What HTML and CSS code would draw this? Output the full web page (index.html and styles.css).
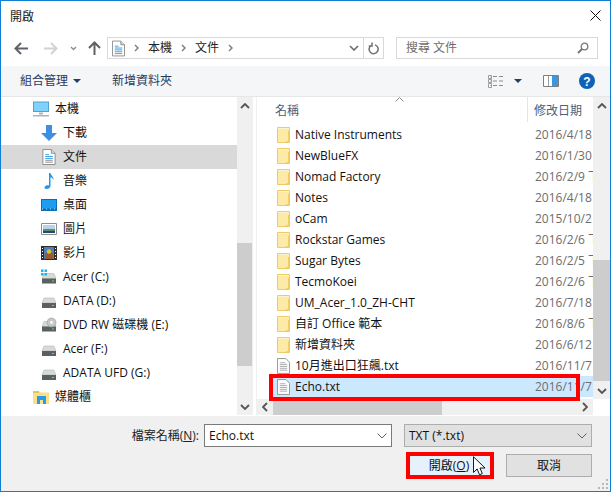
FILE: index.html
```html
<!DOCTYPE html>
<html lang="zh-Hant">
<head>
<meta charset="utf-8">
<title>開啟</title>
<link rel="stylesheet" href="styles.css">
</head>
<body>
<svg class="defs" aria-hidden="true">
  <symbol id="folder" viewBox="0 0 13 16"><path d="M.5.5h12v15H.5z" fill="#fdeaa6" stroke="#eccb6a"/><path d="M1 1h11v1H1z" fill="#fef4cc"/><path d="M11 4h1v11h-1zM9 14h2v1H9z" fill="#f2cf66"/></symbol>
  <symbol id="doc" viewBox="0 0 14 17"><path d="M.5.5h9l4 4v12H.5z" fill="#fff" stroke="#8f8f8f"/><path d="M3 5h6M3 7h8M3 9h8M3 11h8M3 13h8" stroke="#a8a8a8"/></symbol>
  <symbol id="docs" viewBox="0 0 14 17"><path d="M.5.5h9l4 4v12H.5z" fill="#fff" stroke="#8a8a8a"/><path d="M9.500.5v4h4" fill="#ddd" stroke="#8a8a8a"/><path d="M3 6h4M3 8h8M3 10h8" stroke="#2f9be8"/><path d="M3 12h8M3 14h8" stroke="#8a8a8a"/></symbol>
  <symbol id="drive" viewBox="0 0 16 12"><path d="M3 1h10l2 5H1z" fill="#d6dad8" stroke="#b5b8b6" stroke-width=".6"/><path d="M1 6h14v5H1z" fill="#5a5f5f"/><path d="M11 8h2v1h-2z" fill="#5ee06a"/></symbol>
  <symbol id="up-chev" viewBox="0 0 10 6"><path d="M1 5l4-4 4 4" fill="none" stroke="#555" stroke-width="1.800"/></symbol>
  <symbol id="down-chev" viewBox="0 0 10 6"><path d="M1 1l4 4 4-4" fill="none" stroke="#555" stroke-width="1.800"/></symbol>
  <symbol id="thin-chev" viewBox="0 0 10 6"><path d="M.5.5l4.500 4.500 4.500-4.500" fill="none" stroke="#606060"/></symbol>
  <symbol id="crumb" viewBox="0 0 5 8"><path d="M1 1l3 3-3 3" fill="none" stroke="#7a7a7a" stroke-width="1.400"/></symbol>
</svg>

<main class="window">
  <header class="titlebar">
    <span class="title">開啟</span>
    <svg class="close" viewBox="0 0 11 11"><path d="M.5.5l10 10M10.500.5l-10 10" stroke="#111" fill="none"/></svg>
  </header>

  <div class="navbar">
    <svg class="nav-back" viewBox="0 0 14 13"><path d="M7 1L1.500 6.500 7 12M2 6.500h12" fill="none" stroke="#5f6368" stroke-width="2"/></svg>
    <svg class="nav-fwd" viewBox="0 0 14 13"><path d="M7 1l5.500 5.500L7 12M12 6.500H0" fill="none" stroke="#d2d2d2" stroke-width="2"/></svg>
    <svg class="nav-drop" viewBox="0 0 7 5"><path d="M1 1l2.500 2.500L6 1" fill="none" stroke="#8a8a8a" stroke-width="1.300"/></svg>
    <svg class="nav-up" viewBox="0 0 13 14"><path d="M1 7l5.500-5.500L12 7M6.500 2v12" fill="none" stroke="#5f6368" stroke-width="2"/></svg>
    <div class="address">
      <svg class="addr-icon"><use href="#docs"/></svg>
      <svg class="crumb"><use href="#crumb"/></svg><span class="addr-text">本機</span>
      <svg class="crumb"><use href="#crumb"/></svg><span class="addr-text">文件</span>
      <svg class="crumb"><use href="#crumb"/></svg>
      <svg class="addr-drop" viewBox="0 0 10 6"><path d="M1 1l4 4 4-4" fill="none" stroke="#6a6a6a" stroke-width="1.600"/></svg>
      <span class="addr-refresh">
        <svg viewBox="0 0 11 13"><path d="M3 3.500a4.500 4.500 0 1 0 4-.6M4 .5v3.500H.8" fill="none" stroke="#6f6f6f" stroke-width="1.500"/></svg>
      </span>
    </div>
    <div class="search">
      <span>搜尋 文件</span>
      <svg viewBox="0 0 12 12"><circle cx="7.500" cy="4.500" r="3.300" fill="none" stroke="#777" stroke-width="1.300"/><path d="M5 7l-4 4" stroke="#777" stroke-width="2"/></svg>
    </div>
  </div>

  <div class="toolbar">
    <span class="tool tool-org">組合管理</span>
    <svg class="tool-caret" viewBox="0 0 8 4"><path d="M0 0h8L4 4z" fill="#1f3f66"/></svg>
    <span class="tool tool-new">新增資料夾</span>
    <svg class="view-icon" viewBox="0 0 16 13"><path d="M.5.5h3v3h-3zM.5 4.500h3v3h-3zM.5 8.500h3v4h-3z" fill="#fff" stroke="#9a9a9a"/><path d="M2 2h.5M2 6h.5M2 10.500h.5" stroke="#c0503a"/><path d="M5 1.500h4M11 1.500h4M5 6h4M11 6h4M5 10.500h4M11 10.500h4" stroke="#8d8d8d"/></svg>
    <svg class="tool-caret view-caret" viewBox="0 0 8 4"><path d="M0 0h8L4 4z" fill="#1f3f66"/></svg>
    <svg class="pane-icon" viewBox="0 0 16 12"><path d="M.5.500h15v11H.5z" fill="#fff" stroke="#7d7d7d"/><path d="M9 1h6v10H9z" fill="#3d96e0"/><path d="M5.500 1v10" stroke="#9b9b9b"/></svg>
    <svg class="help-icon" viewBox="0 0 16 16"><circle cx="8" cy="8" r="8" fill="#0f62b5"/><text x="8" y="12.500" class="help-q">?</text></svg>
  </div>

  <div class="body">
    <nav class="navpane">
      <ul class="tree">
        <li class="node lv1"><svg class="ni" viewBox="0 0 16 15"><path d="M0 0h16v10.500H0z" fill="#5a9fc9"/><path d="M1 1h14v8.500H1z" fill="#7fd2fb"/><path d="M6 11h4v2H6z" fill="#a8b4bf"/><path d="M0 13.500h16V15H0z" fill="#a8b4bf"/></svg>本機</li>
        <li class="node lv2"><svg class="ni" viewBox="0 0 16 16"><path d="M5 0h6v8h5l-8 8-8-8h5z" fill="#3c8fe2"/></svg>下載</li>
        <li class="node lv2 sel"><svg class="ni"><use href="#docs"/></svg>文件</li>
        <li class="node lv2"><svg class="ni" viewBox="0 0 16 16"><path d="M8 0h1.500c.5 3 3.500 3.500 3 7-.6-1.600-1.700-2.400-3-2.700V13c0 2-2 3-4 3s-2.500-1.500-1.500-2.600c.9-1 2.600-1.400 4-.9z" fill="#1c9bee"/></svg>音樂</li>
        <li class="node lv2"><svg class="ni" viewBox="0 0 16 12"><path d="M0 0h16v12H0z" fill="#0a6fb8"/><path d="M1 1h14v8.500H1z" fill="#1f9bf0"/><path d="M1 10h14" stroke="#bfe3fb" stroke-dasharray="1 3"/></svg>桌面</li>
        <li class="node lv2"><svg class="ni" viewBox="0 0 16 12"><path d="M.5.500h15v11H.5z" fill="#fff" stroke="#8e8e8e" stroke-width="1"/><path d="M2 2h12v4H2z" fill="#b6d4ee"/><path d="M2 6h12v2H2z" fill="#5f8a78"/><path d="M2 8h12v2H2z" fill="#25496b"/></svg>圖片</li>
        <li class="node lv2"><svg class="ni" viewBox="0 0 16 14"><path d="M0 0h16v14H0z" fill="#2d2d2d"/><path d="M3 1h10v12H3z" fill="#4f7fb8"/><path d="M4 7h8v6H4z" fill="#9a5a2a"/><circle cx="8" cy="5.500" r="2.200" fill="#e4bc2e"/><path d="M1 2h1v1H1zM1 5h1v1H1zM1 8h1v1H1zM1 11h1v1H1zM14 2h1v1h-1zM14 5h1v1h-1zM14 8h1v1h-1zM14 11h1v1h-1z" fill="#fff"/></svg>影片</li>
        <li class="node lv2"><svg class="ni" viewBox="0 0 16 15"><use href="#drive" y="3" height="12" width="16"/><path d="M0 0h2.500v2.500H0zM3.500 0H6v2.500H3.500zM0 3.500h2.500V6H0zM3.500 3.500H6V6H3.500z" fill="#1fb2ee"/></svg>Acer (C:)</li>
        <li class="node lv2"><svg class="ni ni-drive"><use href="#drive"/></svg>DATA (D:)</li>
        <li class="node lv2"><svg class="ni" viewBox="0 0 16 15"><use href="#drive" y="3" height="12" width="16"/><circle cx="10.500" cy="5" r="4.500" fill="#c7c7c7" stroke="#9a9a9a" stroke-width=".6"/><circle cx="10.500" cy="5" r="1.400" fill="#fff"/></svg>DVD RW 磁碟機 (E:)</li>
        <li class="node lv2"><svg class="ni ni-drive"><use href="#drive"/></svg>Acer (F:)</li>
        <li class="node lv2"><svg class="ni ni-drive"><use href="#drive"/></svg>ADATA UFD (G:)</li>
        <li class="node lv1"><svg class="ni" viewBox="0 0 16 14"><path d="M0 1h6l1.500 1.500H16V14H0z" fill="#fbe08c"/><path d="M0 1h6v2H0z" fill="#e8c25a"/><path d="M4 6h9v8h-3v-4H7v4H4z" fill="#2a9be6"/></svg>媒體櫃</li>
      </ul>
      <div class="vscroll nav-scroll">
        <svg class="sb-arrow"><use href="#up-chev"/></svg>
        <div class="sb-track nav-track"><div class="sb-thumb nav-thumb"></div></div>
        <svg class="sb-arrow"><use href="#down-chev"/></svg>
      </div>
    </nav>
    <div class="splitter"></div>
    <section class="files">
      <div class="files-main">
        <div class="files-view">
          <div class="columns">
            <span class="col-name">名稱<svg class="sort" viewBox="0 0 9 5"><path d="M.5 4.500l4-4 4 4" fill="none" stroke="#8a8a8a"/></svg></span>
            <span class="col-date">修改日期</span>
          </div>
          <ul class="rows">
            <li class="row"><svg class="fi"><use href="#folder"/></svg><span class="name">Native Instruments</span><span class="date">2016/4/18 下午</span></li>
            <li class="row"><svg class="fi"><use href="#folder"/></svg><span class="name">NewBlueFX</span><span class="date">2016/1/30 下午</span></li>
            <li class="row"><svg class="fi"><use href="#folder"/></svg><span class="name">Nomad Factory</span><span class="date">2016/2/9 下午</span></li>
            <li class="row"><svg class="fi"><use href="#folder"/></svg><span class="name">Notes</span><span class="date">2016/4/18 下午</span></li>
            <li class="row"><svg class="fi"><use href="#folder"/></svg><span class="name">oCam</span><span class="date">2015/10/2 下午</span></li>
            <li class="row"><svg class="fi"><use href="#folder"/></svg><span class="name">Rockstar Games</span><span class="date">2016/2/6 下午</span></li>
            <li class="row"><svg class="fi"><use href="#folder"/></svg><span class="name">Sugar Bytes</span><span class="date">2016/2/5 下午</span></li>
            <li class="row"><svg class="fi"><use href="#folder"/></svg><span class="name">TecmoKoei</span><span class="date">2016/2/6 下午</span></li>
            <li class="row"><svg class="fi"><use href="#folder"/></svg><span class="name">UM_Acer_1.0_ZH-CHT</span><span class="date">2016/7/18 下午</span></li>
            <li class="row"><svg class="fi"><use href="#folder"/></svg><span class="name">自訂 Office 範本</span><span class="date">2016/8/6 下午</span></li>
            <li class="row"><svg class="fi"><use href="#folder"/></svg><span class="name">新增資料夾</span><span class="date">2016/6/12 下午</span></li>
            <li class="row"><svg class="fi"><use href="#doc"/></svg><span class="name">10月進出口狂飆.txt</span><span class="date">2016/11/7 下午</span></li>
            <li class="row row-sel"><svg class="fi"><use href="#doc"/></svg><span class="name">Echo.txt</span><span class="date">2016/11/7 下午</span></li>
          </ul>
        </div>
        <div class="vscroll file-scroll">
          <svg class="sb-arrow"><use href="#up-chev"/></svg>
          <div class="sb-track file-track"><div class="sb-thumb file-thumb"></div></div>
          <svg class="sb-arrow"><use href="#down-chev"/></svg>
        </div>
      </div>
      <div class="hscroll">
        <svg class="hs-arrow" viewBox="0 0 6 10"><path d="M5 1L1 5l4 4" fill="none" stroke="#555" stroke-width="1.800"/></svg>
        <div class="hs-track"><div class="hs-thumb"></div></div>
        <svg class="hs-arrow" viewBox="0 0 6 10"><path d="M1 1l4 4-4 4" fill="none" stroke="#555" stroke-width="1.800"/></svg>
      </div>
    </section>
  </div>

  <footer class="footer">
    <div class="form-row">
      <label class="fname-label">檔案名稱(<u>N</u>):</label>
      <div class="fname-input"><span>Echo.txt</span><svg class="combo-chev"><use href="#thin-chev"/></svg></div>
      <div class="filter"><span>TXT (*.txt)</span><svg class="combo-chev"><use href="#thin-chev"/></svg></div>
    </div>
    <div class="button-row">
      <button class="btn btn-open">開啟(<u>O</u>)</button>
      <button class="btn btn-cancel">取消</button>
    </div>
    <svg class="grip" viewBox="0 0 11 11"><path d="M8 0h2v2H8zM4 4h2v2H4zM8 4h2v2H8zM0 8h2v2H0zM4 8h2v2H4zM8 8h2v2H8z" fill="#b8b8b8"/></svg>
  </footer>

  <div class="mark mark-row"></div>
  <div class="mark mark-btn"></div>
  <svg class="cursor" viewBox="0 0 13 21"><path d="M.5.500v17l4-3.800 2.600 6.300 3-1.300-2.600-6h5.500z" fill="#fff" stroke="#000"/></svg>
</main>
</body>
</html>
```

FILE: styles.css
```css
* { box-sizing: border-box; }
html, body { margin: 0; padding: 0; }
body {
  width: 611px;
  height: 492px;
  overflow: hidden;
  background: #fff;
  font: 12px/16px "Open Sans", "Noto Sans CJK TC", sans-serif;
  color: #111;
}
ul { list-style: none; margin: 0; padding: 0; }
svg { display: block; flex: none; }
.defs { width: 0; height: 0; position: absolute; }

.window {
  position: relative;
  width: 611px;
  height: 492px;
  display: flex;
  flex-direction: column;
  border: 1px solid #0f7fd6;
  background: #fff;
}

/* title */
.titlebar {
  height: 32px;
  display: flex;
  align-items: center;
  justify-content: space-between;
  padding: 0 9px 0 9px;
}
.title { color: #222; }
.close { width: 11px; height: 11px; margin-bottom: 3px; }

/* navigation */
.navbar {
  height: 33px;
  display: flex;
  align-items: center;
  padding-bottom: 3px;
}
.nav-back { width: 14px; height: 13px; margin-left: 13px; }
.nav-fwd { width: 14px; height: 13px; margin-left: 16px; }
.nav-drop { width: 7px; height: 5px; margin-left: 12px; }
.nav-up { width: 13px; height: 14px; margin-left: 11px; }
.address {
  width: 277px;
  height: 22px;
  margin-left: 6px;
  border: 1px solid #d9d9d9;
  display: flex;
  align-items: center;
  padding-left: 4px;
}
.addr-icon { width: 13px; height: 17px; }
.crumb { width: 5px; height: 8px; margin: 0 9px; }
.addr-text { color: #222; }
.addr-drop { width: 10px; height: 6px; margin-left: auto; margin-right: 4px; }
.addr-refresh {
  width: 20px;
  height: 20px;
  border-left: 1px solid #d9d9d9;
  display: flex;
  align-items: center;
  justify-content: center;
}
.addr-refresh svg { width: 11px; height: 13px; }
.search {
  width: 202px;
  height: 22px;
  margin-left: 12px;
  border: 1px solid #d9d9d9;
  display: flex;
  align-items: center;
  justify-content: space-between;
  padding: 0 8px 0 9px;
  color: #6d6d6d;
}
.search svg { width: 12px; height: 12px; }

/* toolbar */
.toolbar {
  height: 31px;
  background: #f5f6f7;
  border-bottom: 1px solid #e6e6e6;
  display: flex;
  align-items: center;
}
.tool { color: #1f3a5f; }
.tool-org { margin-left: 19px; }
.tool-caret { width: 8px; height: 4px; margin-left: 5px; }
.tool-new { margin-left: 31px; }
.view-icon { width: 16px; height: 13px; margin-left: auto; }
.view-caret { margin-left: 10px; }
.pane-icon { width: 16px; height: 12px; margin-left: 21px; }
.help-icon { width: 16px; height: 16px; margin: 0 15px 0 20px; }
.help-q { fill: #fff; font: bold 12px "Liberation Sans", sans-serif; text-anchor: middle; }

/* body */
.body { flex: 1; min-height: 0; display: flex; }
.navpane { width: 251px; display: flex; background: #fff; height: 318px; }
.tree { flex: 1; min-width: 0; }
.node {
  height: 24px;
  display: flex;
  align-items: center;
  white-space: nowrap;
}
.lv1 { padding-left: 32px; }
.lv2 { padding-left: 40px; }
.sel { background: #d9d9d9; }
.ni { width: 16px; height: 16px; margin-right: 6px; }
.ni-drive { height: 12px; margin-top: 3px; }

.vscroll {
  display: flex;
  flex-direction: column;
  background: #f0f0f0;
}
.nav-scroll { width: 15px; }
.sb-arrow { width: 10px; height: 6px; margin: 6px auto 5px; }
.sb-track { flex: 1; }
.sb-thumb { background: #cdcdcd; }
.nav-thumb { height: 123px; margin-top: 129px; }
.splitter { width: 5px; background: #fff; border-left: 1px solid #f0f0f0; border-right: 1px solid #f0f0f0; height: 318px; }

.files { flex: 1; min-width: 0; display: flex; flex-direction: column; height: 318px; }
.files-main { flex: 1; min-height: 0; display: flex; }
.files-view { flex: 1; min-width: 0; overflow: hidden; }
.columns { height: 27px; display: flex; color: #4c607a; }
.col-name {
  position: relative;
  width: 271px;
  height: 25px;
  padding: 6px 0 0 18px;
  border-right: 1px solid #e5e5e5;
}
.sort { position: absolute; left: 138px; top: 0; width: 9px; height: 5px; }
.col-date { padding: 6px 0 0 6px; white-space: nowrap; }
.rows { padding-left: 14px; }
.row {
  height: 21px;
  display: flex;
  align-items: center;
  white-space: nowrap;
}
.fi { width: 13px; height: 16px; margin-left: 6px; margin-right: 5px; }
.name { flex: none; width: 240px; color: #111; }
.date { flex: none; color: #6d6d6d; }
.row-sel { background: #cce8ff; }

.file-scroll { width: 17px; }
.file-thumb { height: 121px; margin-top: 146px; }

.hscroll { height: 16px; display: flex; align-items: center; background: #f0f0f0; margin-right: 17px; }
.hs-arrow { width: 6px; height: 10px; margin: 0 5px; }
.hs-track { flex: 1; height: 16px; }
.hs-thumb { width: 169px; height: 16px; background: #cdcdcd; }

/* footer */
.footer {
  position: relative;
  flex: none;
  height: 75px;
  background: #f0f0f0;
  padding: 8px 18px 0 0;
}
.form-row { display: flex; align-items: center; height: 23px; }
.fname-label { width: 199px; text-align: right; color: #222; }
.fname-input {
  flex: none;
  width: 188px;
  height: 23px;
  margin-left: 5px;
  background: #fff;
  border: 1px solid #7a7a7a;
  display: flex;
  align-items: center;
  justify-content: space-between;
  padding: 0 4px;
}
.filter {
  flex: none;
  width: 188px;
  height: 23px;
  margin-left: 12px;
  background: #e1e1e1;
  border: 1px solid #adadad;
  display: flex;
  align-items: center;
  justify-content: space-between;
  padding: 0 4px;
}
.combo-chev { width: 10px; height: 6px; }
.button-row { display: flex; justify-content: flex-end; margin-top: 7px; }
.btn {
  height: 23px;
  font: inherit;
  padding: 0;
  color: #111;
}
.btn-open { width: 86px; background: #e5f1fb; border: 1px solid #0078d7; }
.btn-cancel { width: 86px; margin-left: 14px; background: #e1e1e1; border: 1px solid #adadad; }
.grip { position: absolute; right: 1px; bottom: 1px; width: 11px; height: 11px; }

/* annotations */
.mark { position: absolute; border: 4px solid #f00; }
.mark-row { left: 268px; top: 373px; width: 311px; height: 27px; }
.mark-btn { left: 405px; top: 451px; width: 88px; height: 27px; }
.cursor { position: absolute; left: 472px; top: 455px; width: 12px; height: 20px; }
```
